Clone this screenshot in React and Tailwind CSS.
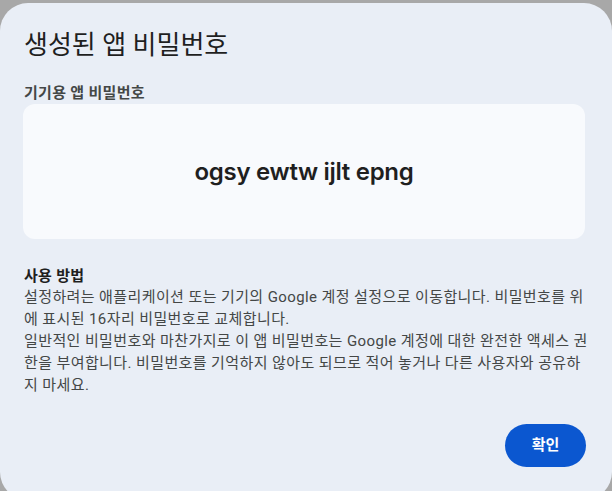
import React from "react";

const bodyLines = [
  "설정하려는 애플리케이션 또는 기기의 Google 계정 설정으로 이동합니다. 비밀번호를 위",
  "에 표시된 16자리 비밀번호로 교체합니다.",
  "일반적인 비밀번호와 마찬가지로 이 앱 비밀번호는 Google 계정에 대한 완전한 액세스 권",
  "한을 부여합니다. 비밀번호를 기억하지 않아도 되므로 적어 놓거나 다른 사용자와 공유하",
  "지 마세요.",
];

export default function App() {
  return (
    <div className="h-[491px] w-[612px] overflow-hidden bg-[#a8a8a8] pt-[3px] font-['Roboto','Noto_Sans_CJK_KR',sans-serif]">
      <div className="flex h-[497px] w-[612px] flex-col rounded-[28px] bg-[#e9eef6] px-6">
        <h1 className="mt-[26px] text-[26px] leading-[32px] font-normal text-[#1f1f1f]">
          생성된 앱 비밀번호
        </h1>

        <div className="mt-[22px] text-[15px] leading-[20px] font-bold tracking-[0.3px] text-[#444746]">
          기기용 앱 비밀번호
        </div>

        <div className="mt-px -ml-px flex h-[135px] w-[562px] items-center justify-center rounded-xl bg-[#f8fafd]">
          <span className="font-['Inter',sans-serif] text-[24px] font-semibold tracking-[-0.3px] text-[#1f1f1f]">
            ogsy ewtw ijlt epng
          </span>
        </div>

        <div className="mt-[27px] text-[15px] leading-[20px] font-bold tracking-[0.3px] text-[#1f1f1f]">
          사용 방법
        </div>
        <div className="text-[15px] leading-[22px] tracking-[0.4px] text-[#444746]">
          {bodyLines.map((l, i) => (
            <div key={i} className="whitespace-nowrap">
              {l}
            </div>
          ))}
        </div>

        <div className="mt-[28px] mr-[2px] flex justify-end">
          <button className="h-[43px] w-[81px] rounded-full bg-[#0b57d0] text-[15px] font-bold text-white">
            확인
          </button>
        </div>
      </div>
    </div>
  );
}
